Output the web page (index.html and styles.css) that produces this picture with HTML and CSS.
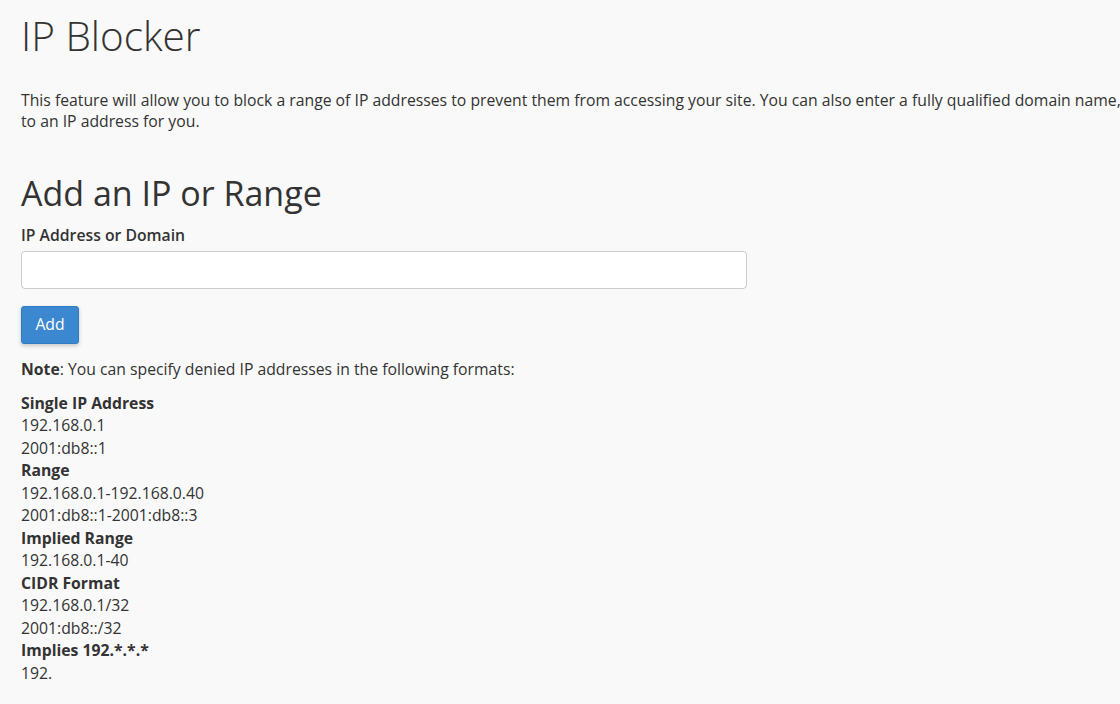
FILE: index.html
```html
<!DOCTYPE html>
<html lang="en">
<head>
<meta charset="utf-8">
<title>IP Blocker</title>
<link rel="stylesheet" href="styles.css">
</head>
<body>
<div class="page">
  <h1 class="page-title">IP Blocker</h1>
  <p class="intro">This feature will allow you to block a range of IP addresses to prevent them from accessing your site. You can also enter a fully qualified domain name, and the IP Blocker will attempt to resolve it to an IP address for you.</p>

  <h2 class="section-title">Add an IP or Range</h2>
  <form class="add-form">
    <label class="field-label" for="ip">IP Address or Domain</label>
    <input class="field-input" id="ip" type="text">
    <button class="btn-primary" type="button">Add</button>
  </form>

  <p class="note"><strong>Note</strong>: You can specify denied IP addresses in the following formats:</p>

  <dl class="formats">
    <dt>Single IP Address</dt>
    <dd>192.168.0.1</dd>
    <dd>2001:db8::1</dd>
    <dt>Range</dt>
    <dd>192.168.0.1-192.168.0.40</dd>
    <dd>2001:db8::1-2001:db8::3</dd>
    <dt>Implied Range</dt>
    <dd>192.168.0.1-40</dd>
    <dt>CIDR Format</dt>
    <dd>192.168.0.1/32</dd>
    <dd>2001:db8::/32</dd>
    <dt>Implies 192.*.*.*</dt>
    <dd>192.</dd>
  </dl>
</div>
</body>
</html>
```
FILE: styles.css
```css
html, body {
  margin: 0;
  padding: 0;
  overflow: hidden;
  background: #f9f9f9;
}
body {
  font-family: "Open Sans", "Liberation Sans", sans-serif;
  font-size: 15.75px;
  color: #333;
  line-height: 22.5px;
}
.page {
  width: 1425px;
  padding: 0 21px;
}
.page-title {
  font-size: 40.5px;
  font-weight: 300;
  line-height: 44px;
  margin: 14px 0 0;
}
.intro {
  margin: 32px 0 0;
  line-height: 21px;
}
.section-title {
  font-size: 34px;
  font-weight: 400;
  line-height: 40px;
  margin: 41px 0 0;
}
.add-form {
  display: flex;
  flex-direction: column;
  align-items: flex-start;
  margin-top: 11px;
}
.field-label {
  font-weight: 600;
  line-height: 22px;
}
.field-input {
  box-sizing: border-box;
  width: 726px;
  height: 38px;
  margin-top: 5px;
  border: 1px solid #ccc;
  border-radius: 4px;
  background: #fff;
  font: inherit;
  padding: 6px 12px;
}
.btn-primary {
  margin-top: 17px;
  box-sizing: border-box;
  width: 58px;
  height: 38px;
  background: #3b88d0;
  border: 1px solid #2f7bc4;
  border-radius: 3px;
  color: #fff;
  font-family: inherit;
  font-size: 15.75px;
  line-height: 20px;
  box-shadow: 0 2px 4px rgba(0,0,0,0.2);
  padding: 0 0 2px;
}
.note {
  margin: 14px 0 0;
}
.formats {
  margin: 11px 0 0;
}
.formats dt {
  font-weight: 700;
}
.formats dd {
  margin: 0;
}
```
